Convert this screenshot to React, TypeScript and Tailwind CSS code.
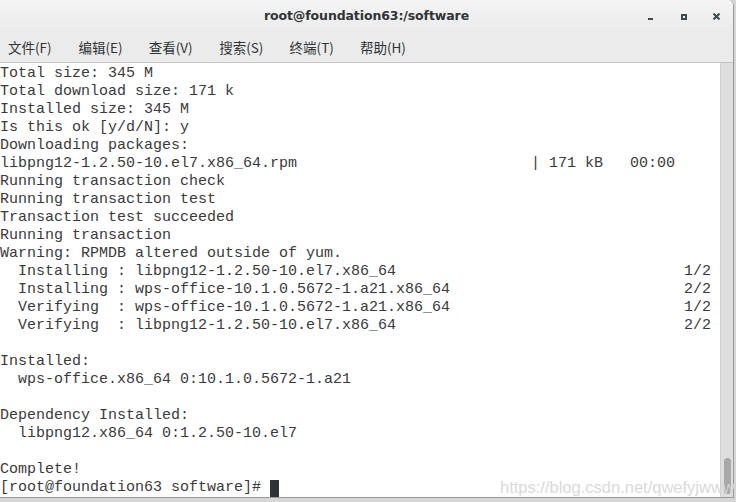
import React from 'react'

const pad = (s: string, n: number) => s + ' '.repeat(Math.max(0, n - s.length))

const lines: string[] = [
  'Total size: 345 M',
  'Total download size: 171 k',
  'Installed size: 345 M',
  'Is this ok [y/d/N]: y',
  'Downloading packages:',
  pad('libpng12-1.2.50-10.el7.x86_64.rpm', 59) + '| 171 kB   00:00',
  'Running transaction check',
  'Running transaction test',
  'Transaction test succeeded',
  'Running transaction',
  'Warning: RPMDB altered outside of yum.',
  pad('  Installing : libpng12-1.2.50-10.el7.x86_64', 76) + '1/2',
  pad('  Installing : wps-office-10.1.0.5672-1.a21.x86_64', 76) + '2/2',
  pad('  Verifying  : wps-office-10.1.0.5672-1.a21.x86_64', 76) + '1/2',
  pad('  Verifying  : libpng12-1.2.50-10.el7.x86_64', 76) + '2/2',
  '',
  'Installed:',
  '  wps-office.x86_64 0:10.1.0.5672-1.a21',
  '',
  'Dependency Installed:',
  '  libpng12.x86_64 0:1.2.50-10.el7',
  '',
  'Complete!',
]

const menus = ['文件(F)', '编辑(E)', '查看(V)', '搜索(S)', '终端(T)', '帮助(H)']

export default function App() {
  return (
    <div className="relative w-[736px] h-[502px] overflow-hidden bg-[#d6d6d6]">
      <div className="flex flex-col w-[734px] h-[498px] bg-white border-r border-b border-[#9a9a9a] rounded-tr-[6px] overflow-hidden">
        {/* Title bar */}
        <div className="relative h-[33px] flex items-center justify-center bg-gradient-to-b from-[#f4f4f4] to-[#ebebeb]">
          <span className="text-[12.5px] font-bold text-[#2e3436] font-['DejaVu_Sans',sans-serif] tracking-[-0.1px]">
            root@foundation63:/software
          </span>
          <div className="absolute right-0 top-0 h-full flex items-center">
            <div className="w-[33px] flex justify-center pt-[5px]">
              <div className="w-[5px] h-[2px] bg-[#3c4a52]" />
            </div>
            <div className="w-[33px] flex justify-center">
              <div className="w-[6px] h-[6px] border-2 border-[#3c4a52]" />
            </div>
            <div className="w-[33px] flex justify-center">
              <svg width="7" height="7" viewBox="0 0 7 7">
                <path d="M0.5 0.5 L6.5 6.5 M6.5 0.5 L0.5 6.5" stroke="#3c4a52" strokeWidth="2" />
              </svg>
            </div>
          </div>
        </div>

        {/* Menu bar */}
        <div className="h-[30px] flex items-center pl-[8px] bg-[#ebebeb] border-b border-[#c4c4c4] font-['Noto_Sans_CJK_SC',sans-serif] text-[13.5px] text-[#2e3436]">
          {menus.map((m) => (
            <span key={m} className="w-[70.4px] shrink-0">{m}</span>
          ))}
        </div>

        {/* Terminal */}
        <div className="flex flex-1 min-h-0">
          <div className="flex-1 pt-[2px] font-['Liberation_Mono',monospace] text-[15px] leading-[18px] text-[#3a3a3a] whitespace-pre overflow-hidden">
            {lines.map((l, i) => (
              <div key={i} className="h-[18px]">{l}</div>
            ))}
            <div className="h-[18px] flex items-center">
              <span>[root@foundation63 software]# </span>
              <span className="w-[9px] h-[17px] bg-[#2e3436]" />
            </div>
          </div>
          <div className="w-[13px] bg-[#dedede] border-l border-[#cfcfcf] flex flex-col justify-end items-center pb-[3px]">
            <div className="w-[7px] h-[36px] rounded-full bg-[#a8a8a8]" />
          </div>
        </div>
      </div>

      {/* watermark */}
      <div className="absolute left-[500px] top-[475px] text-[16.5px] text-[#d6d6d6] font-['Liberation_Sans',sans-serif] opacity-90">
        https://blog.csdn.net/qwefyjwww
      </div>
    </div>
  )
}
